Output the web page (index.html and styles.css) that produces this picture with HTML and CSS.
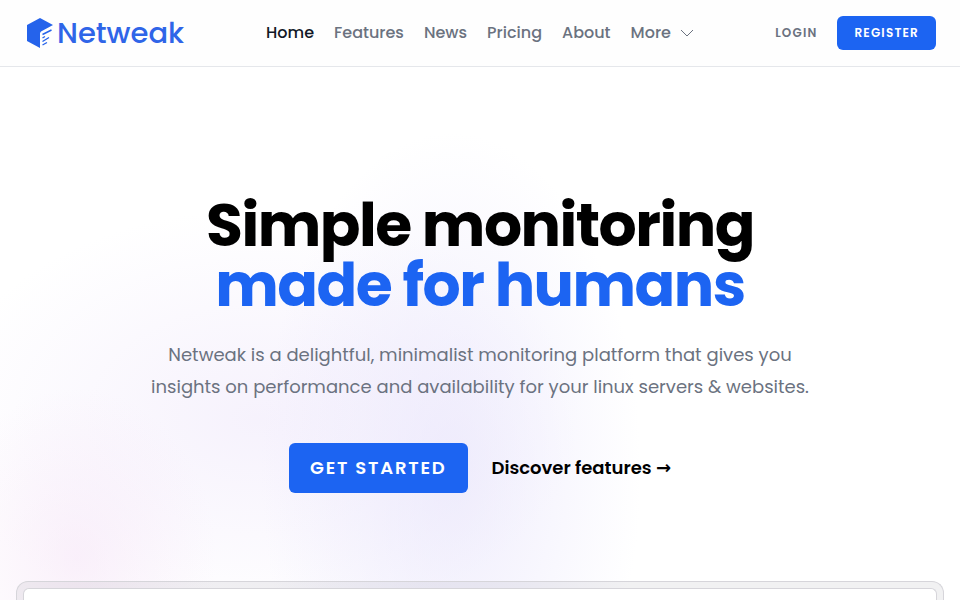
FILE: index.html
```html
<!DOCTYPE html>
<html lang="en">
<head>
  <meta charset="UTF-8">
  <meta name="viewport" content="width=device-width, initial-scale=1">
  <title>Netweak</title>
  <link rel="stylesheet" href="styles.css">
</head>
<body>
  <header class="header">
    <a class="logo" href="#">
      <svg class="logo-icon" width="28" height="32" viewBox="0 0 28 32" aria-hidden="true">
        <path fill="#2563eb" d="M14 1 L27 8 L15 14.500 L14 16 V31 L1 24 V8 Z"/>
        <path fill="none" stroke="#2563eb" stroke-width="1.4" d="M16.500 17.500 L25.500 13 M16.500 21 L19 19.500 M16.500 24.500 L23 20.500 M16.500 28 L21 25.500"/>
      </svg>
      <span>Netweak</span>
    </a>
    <nav class="nav">
      <a class="nav-link active" href="#">Home</a>
      <a class="nav-link" href="#">Features</a>
      <a class="nav-link" href="#">News</a>
      <a class="nav-link" href="#">Pricing</a>
      <a class="nav-link" href="#">About</a>
      <button class="nav-link more" type="button">More
        <svg width="14" height="8" viewBox="0 0 14 8" aria-hidden="true">
          <path fill="none" stroke="currentColor" stroke-width="1" d="M1 1 L7 7 L13 1"/>
        </svg>
      </button>
    </nav>
    <div class="account">
      <a class="login" href="#">LOGIN</a>
      <a class="btn btn-small" href="#">REGISTER</a>
    </div>
  </header>
  <main class="hero">
    <h1 class="title">Simple monitoring<br><span class="blue">made for humans</span></h1>
    <p class="intro">Netweak is a delightful, minimalist monitoring platform that gives you<br>insights on performance and availability for your linux servers &amp; websites.</p>
    <div class="actions">
      <a class="btn btn-large" href="#">GET STARTED</a>
      <a class="discover" href="#">Discover features →</a>
    </div>
    <div class="frame">
      <div class="screen"></div>
    </div>
  </main>
</body>
</html>
```

FILE: styles.css
```css
*{
  box-sizing: border-box;
}
body{
  margin: 0;
  height: 100vh;
  overflow: hidden;
  display: flex;
  flex-direction: column;
  font-family: Poppins, "DejaVu Sans", sans-serif;
  background-color: #fff;
  color: #000;
}
a{
  color: inherit;
  text-decoration: none;
}

/* header */
.header{
  display: grid;
  grid-template-columns: 1fr auto 1fr;
  align-items: center;
  padding: 16px 24px;
  border-bottom: 1px solid #e5e7eb;
  background-color: #fefefe;
}
.logo{
  display: flex;
  align-items: center;
  gap: 3px;
  height: 34px;
  padding-left: 2px;
  color: #2f65e8;
  font-size: 29px;
  font-weight: 500;
}
.nav{
  display: flex;
  align-items: center;
  gap: 20px;
}
.nav-link{
  color: #6b7280;
  font-size: 16px;
  font-weight: 500;
  line-height: 24px;
}
.active{
  color: #111827;
}
.more{
  display: flex;
  align-items: center;
  gap: 9px;
  padding: 0;
  border: 0;
  background: none;
  font-family: inherit;
}
.account{
  display: flex;
  align-items: center;
  justify-content: flex-end;
  gap: 20px;
}
.login{
  color: #6b7280;
  font-size: 12px;
  font-weight: 600;
  letter-spacing: .1em;
}
.btn{
  border-radius: 6px;
  background-color: #1c64f2;
  color: #fff;
  font-weight: 600;
}
.btn-small{
  padding: 0 17px;
  font-size: 12px;
  line-height: 34px;
  letter-spacing: .1em;
}
.btn-large{
  padding: 0 21px;
  font-size: 18px;
  line-height: 50px;
  letter-spacing: .1em;
}

/* hero */
.hero{
  flex: 1;
  display: flex;
  flex-direction: column;
  align-items: center;
  padding: 128px 16px 0;
  text-align: center;
  background:
    radial-gradient(ellipse 140px 170px at 8% 92%, rgba(245, 226, 246, .5), rgba(245, 226, 246, 0)),
    radial-gradient(ellipse 190px 340px at 47% 76%, rgba(229, 225, 251, .6), rgba(229, 225, 251, 0)),
    radial-gradient(ellipse 320px 210px at 27% 66%, rgba(240, 233, 251, .6), rgba(240, 233, 251, 0)),
    #fff;
}
.title{
  margin: 0;
  font-size: 60px;
  font-weight: 700;
  line-height: 60px;
  letter-spacing: -.025em;
}
.blue{
  color: #1c64f2;
}
.intro{
  margin: 24px 0 0;
  color: #6b7280;
  font-size: 18px;
  line-height: 32px;
}
.actions{
  display: flex;
  align-items: center;
  gap: 24px;
  margin-top: 40px;
}
.discover{
  font-size: 18px;
  font-weight: 600;
  line-height: 28px;
}
.frame{
  flex: 1;
  align-self: stretch;
  display: flex;
  margin-top: 88px;
  padding: 6px 6px 0;
  border: 1px solid #d6d5da;
  border-bottom: 0;
  border-radius: 12px 12px 0 0;
  background-color: rgba(17, 24, 39, .06);
}
.screen{
  flex: 1;
  border: 1px solid #d6d5da;
  border-bottom: 0;
  border-radius: 6px 6px 0 0;
  background-color: #fff;
}
```
